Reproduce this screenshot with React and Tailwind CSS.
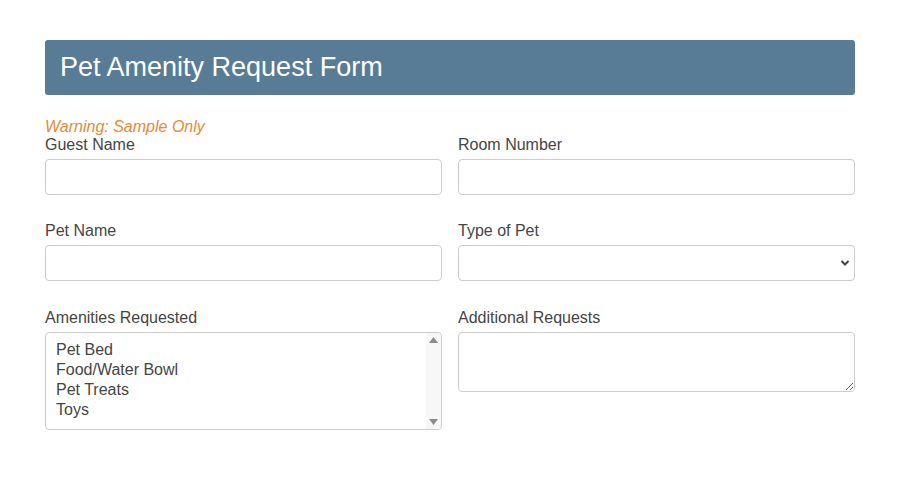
import React from "react";

function Field({ label, children }) {
  return (
    <div className="flex flex-col">
      <label className="text-[16px] leading-[18px] text-[#454545] mb-[5px]">{label}</label>
      {children}
    </div>
  );
}

const inputCls =
  "h-[36px] w-full border border-[#cccccc] rounded-[4px] bg-white px-3 text-[16px] outline-none";

export default function App() {
  return (
    <div
      className="w-[900px] h-[480px] bg-white px-[45px] pt-[40px]"
      style={{ fontFamily: '"Liberation Sans", Arial, sans-serif' }}
    >
      <div className="h-[55px] bg-[#587c96] rounded-[3px] flex items-center px-[15px]">
        <h1 className="text-white text-[27px] leading-none">Pet Amenity Request Form</h1>
      </div>
      <div className="mt-[23px] text-[16px] leading-[18px] italic text-[#e88a33]">Warning: Sample Only</div>
      <div className="grid grid-cols-2 gap-x-[16px]">
        <Field label="Guest Name">
          <input className={inputCls} />
        </Field>
        <Field label="Room Number">
          <input className={inputCls} />
        </Field>
        <div className="col-span-2 h-[27px]" />
        <Field label="Pet Name">
          <input className={inputCls} />
        </Field>
        <Field label="Type of Pet">
          <div className="relative h-[36px] w-full border border-[#cccccc] rounded-[4px] bg-white">
            <svg
              className="absolute right-[4px] top-[13px]"
              width="10"
              height="8"
              viewBox="0 0 10 8"
            >
              <path d="M1.5 2 L5 5.5 L8.5 2" fill="none" stroke="#444" strokeWidth="2" />
            </svg>
          </div>
        </Field>
        <div className="col-span-2 h-[28px]" />
        <Field label="Amenities Requested">
          <div className="h-[98px] w-full border border-[#cccccc] rounded-[4px] bg-white flex overflow-hidden">
            <div className="flex-1 pl-[10px] pt-[7px] text-[16px] leading-[20px] text-[#454545]">
              <div>Pet Bed</div>
              <div>Food/Water Bowl</div>
              <div>Pet Treats</div>
              <div>Toys</div>
            </div>
            <div className="w-[15px] bg-[#f7f7f7] flex flex-col justify-between items-center py-[4px]">
              <svg width="9" height="6" viewBox="0 0 9 6">
                <path d="M0 6 L4.5 0 L9 6 Z" fill="#8a8a8a" />
              </svg>
              <svg width="9" height="6" viewBox="0 0 9 6">
                <path d="M0 0 L4.5 6 L9 0 Z" fill="#8a8a8a" />
              </svg>
            </div>
          </div>
        </Field>
        <Field label="Additional Requests">
          <textarea className="h-[60px] w-full border border-[#cccccc] rounded-[4px] bg-white px-3 outline-none resize-y" />
        </Field>
      </div>
    </div>
  );
}
